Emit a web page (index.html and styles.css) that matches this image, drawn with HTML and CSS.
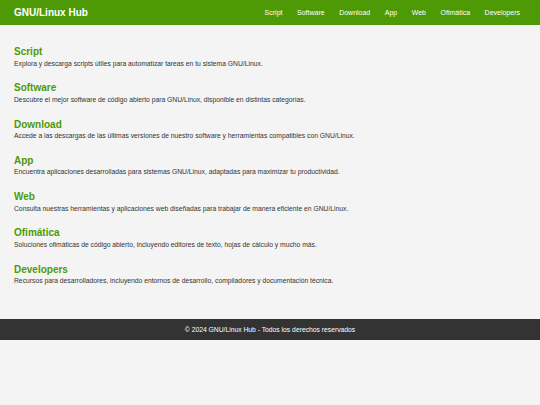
FILE: index.html
```html
<!DOCTYPE html>
<html lang="es">
<head>
<meta charset="utf-8">
<title>GNU/Linux Hub</title>
<link rel="stylesheet" href="styles.css">
</head>
<body>
<header class="topbar">
  <div class="logo">GNU/Linux Hub</div>
  <nav class="nav">
    <a href="#">Script</a>
    <a href="#">Software</a>
    <a href="#">Download</a>
    <a href="#">App</a>
    <a href="#">Web</a>
    <a href="#">Ofimática</a>
    <a href="#">Developers</a>
  </nav>
</header>
<main class="content">
  <section class="item">
    <h2>Script</h2>
    <p>Explora y descarga scripts útiles para automatizar tareas en tu sistema GNU/Linux.</p>
  </section>
  <section class="item">
    <h2>Software</h2>
    <p>Descubre el mejor software de código abierto para GNU/Linux, disponible en distintas categorías.</p>
  </section>
  <section class="item">
    <h2>Download</h2>
    <p>Accede a las descargas de las últimas versiones de nuestro software y herramientas compatibles con GNU/Linux.</p>
  </section>
  <section class="item">
    <h2>App</h2>
    <p>Encuentra aplicaciones desarrolladas para sistemas GNU/Linux, adaptadas para maximizar tu productividad.</p>
  </section>
  <section class="item">
    <h2>Web</h2>
    <p>Consulta nuestras herramientas y aplicaciones web diseñadas para trabajar de manera eficiente en GNU/Linux.</p>
  </section>
  <section class="item">
    <h2>Ofimática</h2>
    <p>Soluciones ofimáticas de código abierto, incluyendo editores de texto, hojas de cálculo y mucho más.</p>
  </section>
  <section class="item">
    <h2>Developers</h2>
    <p>Recursos para desarrolladores, incluyendo entornos de desarrollo, compiladores y documentación técnica.</p>
  </section>
</main>
<footer class="footer">© 2024 GNU/Linux Hub - Todos los derechos reservados</footer>
</body>
</html>
```

FILE: styles.css
```css
html, body {
  margin: 0;
  padding: 0;
  background: #f4f4f4;
  font-family: "Liberation Sans", Arial, sans-serif;
  color: #333;
}

.topbar {
  height: 24.5px;
  background: #4e9a06;
  display: flex;
  align-items: center;
  justify-content: space-between;
  padding: 0 20px 0 14px;
  box-sizing: border-box;
}

.logo {
  color: #fff;
  font-weight: bold;
  font-size: 10px;
}

.nav {
  display: flex;
  gap: 14.5px;
}

.nav a {
  color: #fff;
  text-decoration: none;
  font-size: 7px;
}

.content {
  padding: 21.5px 14px 18.9px;
}

.item {
  margin-bottom: 14.8px;
}

.item h2 {
  margin: 0 0 0.5px;
  font-size: 10px;
  line-height: 12px;
  color: #4e9a06;
}

.item p {
  margin: 0;
  font-size: 6.75px;
  line-height: 9px;
  color: #333;
}

.footer {
  background: #333;
  color: #fff;
  text-align: center;
  font-size: 6.75px;
  height: 21.5px;
  line-height: 21.5px;
}
```
